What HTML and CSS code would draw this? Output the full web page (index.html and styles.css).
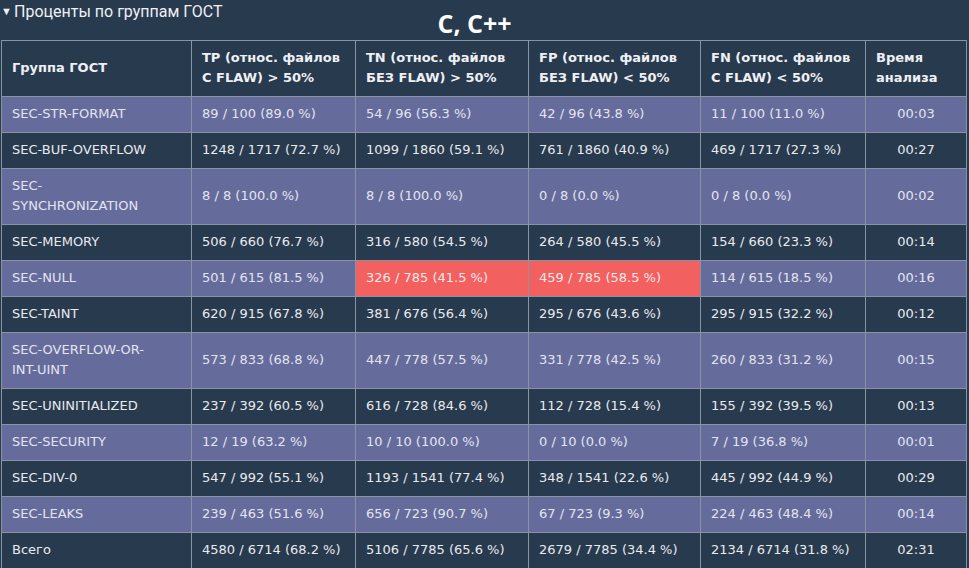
FILE: index.html
```html
<!DOCTYPE html>
<html lang="ru">
<head>
<meta charset="utf-8">
<link rel="stylesheet" href="styles.css">
</head>
<body>
<div class="top">
  <div class="summary"><span class="marker">▼</span>Проценты по группам ГОСТ</div>
  <h1 class="title">С, С++</h1>
  <div></div>
</div>
<table class="grid">
  <colgroup>
    <col class="c1"><col class="c2"><col class="c3"><col class="c4"><col class="c5"><col class="c6">
  </colgroup>
  <thead>
    <tr>
      <th class="mid">Группа ГОСТ</th>
      <th>TP (относ. файлов<br>С FLAW) &gt; 50%</th>
      <th>TN (относ. файлов<br>БЕЗ FLAW) &gt; 50%</th>
      <th>FP (относ. файлов<br>БЕЗ FLAW) &lt; 50%</th>
      <th>FN (относ. файлов<br>С FLAW) &lt; 50%</th>
      <th>Время<br>анализа</th>
    </tr>
  </thead>
  <tbody>
    <tr class="light"><td>SEC-STR-FORMAT</td><td>89 / 100 (89.0 %)</td><td>54 / 96 (56.3 %)</td><td>42 / 96 (43.8 %)</td><td>11 / 100 (11.0 %)</td><td class="time">00:03</td></tr>
    <tr class="dark"><td>SEC-BUF-OVERFLOW</td><td>1248 / 1717 (72.7 %)</td><td>1099 / 1860 (59.1 %)</td><td>761 / 1860 (40.9 %)</td><td>469 / 1717 (27.3 %)</td><td class="time">00:27</td></tr>
    <tr class="light"><td>SEC-<br>SYNCHRONIZATION</td><td>8 / 8 (100.0 %)</td><td>8 / 8 (100.0 %)</td><td>0 / 8 (0.0 %)</td><td>0 / 8 (0.0 %)</td><td class="time">00:02</td></tr>
    <tr class="dark"><td>SEC-MEMORY</td><td>506 / 660 (76.7 %)</td><td>316 / 580 (54.5 %)</td><td>264 / 580 (45.5 %)</td><td>154 / 660 (23.3 %)</td><td class="time">00:14</td></tr>
    <tr class="light"><td>SEC-NULL</td><td>501 / 615 (81.5 %)</td><td class="bad">326 / 785 (41.5 %)</td><td class="bad">459 / 785 (58.5 %)</td><td>114 / 615 (18.5 %)</td><td class="time">00:16</td></tr>
    <tr class="dark"><td>SEC-TAINT</td><td>620 / 915 (67.8 %)</td><td>381 / 676 (56.4 %)</td><td>295 / 676 (43.6 %)</td><td>295 / 915 (32.2 %)</td><td class="time">00:12</td></tr>
    <tr class="light"><td>SEC-OVERFLOW-OR-<br>INT-UINT</td><td>573 / 833 (68.8 %)</td><td>447 / 778 (57.5 %)</td><td>331 / 778 (42.5 %)</td><td>260 / 833 (31.2 %)</td><td class="time">00:15</td></tr>
    <tr class="dark"><td>SEC-UNINITIALIZED</td><td>237 / 392 (60.5 %)</td><td>616 / 728 (84.6 %)</td><td>112 / 728 (15.4 %)</td><td>155 / 392 (39.5 %)</td><td class="time">00:13</td></tr>
    <tr class="light"><td>SEC-SECURITY</td><td>12 / 19 (63.2 %)</td><td>10 / 10 (100.0 %)</td><td>0 / 10 (0.0 %)</td><td>7 / 19 (36.8 %)</td><td class="time">00:01</td></tr>
    <tr class="dark"><td>SEC-DIV-0</td><td>547 / 992 (55.1 %)</td><td>1193 / 1541 (77.4 %)</td><td>348 / 1541 (22.6 %)</td><td>445 / 992 (44.9 %)</td><td class="time">00:29</td></tr>
    <tr class="light"><td>SEC-LEAKS</td><td>239 / 463 (51.6 %)</td><td>656 / 723 (90.7 %)</td><td>67 / 723 (9.3 %)</td><td>224 / 463 (48.4 %)</td><td class="time">00:14</td></tr>
    <tr class="dark"><td>Всего</td><td>4580 / 6714 (68.2 %)</td><td>5106 / 7785 (65.6 %)</td><td>2679 / 7785 (34.4 %)</td><td>2134 / 6714 (31.8 %)</td><td class="time">02:31</td></tr>
  </tbody>
</table>
</body>
</html>
```

FILE: styles.css
```css
html, body {
  margin: 0;
  padding: 0;
  background: #283a4e;
}
body {
  padding: 0 1px 0 1px;
  color: #e6e8ee;
  font-family: "DejaVu Sans", sans-serif;
}
.top {
  display: grid;
  grid-template-columns: 1fr auto 1fr;
  height: 40px;
}
.summary {
  font-family: Roboto, "Noto Sans", sans-serif;
  font-size: 16px;
  line-height: 24px;
  color: #eef0f4;
  align-self: start;
  white-space: nowrap;
  display: flex;
  align-items: center;
}
.marker {
  font-size: 11px;
  width: 13px;
  padding-left: 0;
}
.title {
  margin: 0 20px 0 0;
  font-family: "Open Sans", sans-serif;
  font-weight: 700;
  font-size: 25px;
  line-height: 46px;
  color: #ffffff;
}
.grid {
  border-collapse: collapse;
  table-layout: fixed;
  width: 966px;
  font-size: 13px;
}
.c1 { width: 190px; }
.c2 { width: 164px; }
.c3 { width: 173px; }
.c4 { width: 172px; }
.c5 { width: 165px; }
.c6 { width: 101px; }
.grid th, .grid td {
  border: 1px solid #8893a4;
  padding: 7px 10px 8px 10px;
  line-height: 20px;
  text-align: left;
  vertical-align: middle;
  white-space: nowrap;
}
.grid th {
  font-weight: 700;
  background: #283a4e;
  color: #eef0f4;
}
.light td {
  background: #656c9b;
  color: #e3e4f0;
}
.dark td {
  background: #283a4e;
  color: #e8eaee;
}
.grid td.time {
  text-align: center;
}
.light td.bad {
  background: #f26060;
  color: #fbe8e8;
}
```
